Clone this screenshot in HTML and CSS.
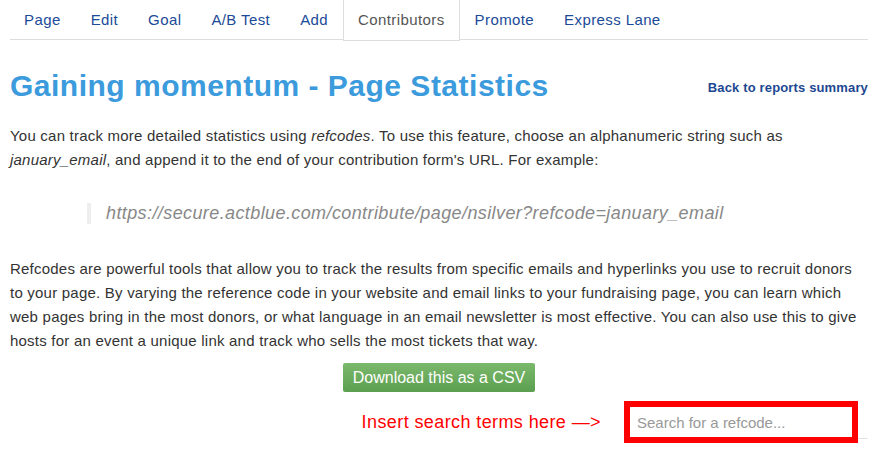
FILE: index.html
```html
<!DOCTYPE html>
<html>
<head>
<meta charset="utf-8">
<link rel="stylesheet" href="styles.css">
</head>
<body>
<div class="page">
  <ul class="tabs">
    <li><a href="#">Page</a></li>
    <li><a href="#">Edit</a></li>
    <li><a href="#">Goal</a></li>
    <li><a href="#">A/B Test</a></li>
    <li><a href="#">Add</a></li>
    <li class="active"><a href="#">Contributors</a></li>
    <li><a href="#">Promote</a></li>
    <li><a href="#">Express Lane</a></li>
  </ul>
  <div class="header">
    <h1 class="title">Gaining momentum - Page Statistics</h1>
    <a class="back" href="#">Back to reports summary</a>
  </div>
  <p class="text">You can track more detailed statistics using <em>refcodes</em>. To use this feature, choose an alphanumeric string such as <em>january_email</em>, and append it to the end of your contribution form's URL. For example:</p>
  <blockquote class="quote">https://secure.actblue.com/contribute/page/nsilver?refcode=january_email</blockquote>
  <p class="text">Refcodes are powerful tools that allow you to track the results from specific emails and hyperlinks you use to recruit donors to your page. By varying the reference code in your website and email links to your fundraising page, you can learn which web pages bring in the most donors, or what language in an email newsletter is most effective. You can also use this to give hosts for an event a unique link and track who sells the most tickets that way.</p>
  <div class="actions">
    <a class="btn" href="#">Download this as a CSV</a>
  </div>
  <div class="search-row">
    <span class="hint">Insert search terms here —&gt;</span>
    <div class="search">
      <input class="search-input" type="text" placeholder="Search for a refcode...">
      <div class="highlight"></div>
    </div>
  </div>
</div>
</body>
</html>
```

FILE: styles.css
```css
html, body {
  margin: 0;
  padding: 0;
  background: #fff;
}
body {
  font-family: "Liberation Sans", Arial, sans-serif;
  color: #333;
  overflow: hidden;
}
.page {
  width: 858px;
  padding-left: 10px;
}
.tabs {
  list-style: none;
  margin: 0;
  padding: 0;
  display: flex;
  border-bottom: 1px solid #ddd;
  height: 39px;
}
.tabs li {
  display: block;
}
.tabs a {
  display: block;
  height: 39px;
  line-height: 39px;
  padding: 0 14px;
  border: 1px solid transparent;
  border-top: 0;
  font-size: 15px;
  letter-spacing: 0.4px;
  color: #1b4a98;
  text-decoration: none;
}
.tabs li:first-child a {
  padding-left: 13px;
}
.tabs .active a {
  color: #555;
  border-color: #ddd;
  background: #fff;
  height: 40px;
  margin-bottom: -1px;
}
.header {
  display: flex;
  justify-content: space-between;
  align-items: baseline;
  margin-top: 28px;
}
.title {
  margin: 0;
  font-size: 30px;
  line-height: 36px;
  font-weight: bold;
  color: #3b9bdc;
  letter-spacing: 0.5px;
}
.back {
  font-size: 13px;
  font-weight: bold;
  letter-spacing: 0.15px;
  color: #1d4891;
  text-decoration: none;
  position: relative;
  top: -4px;
}
.text {
  font-size: 15px;
  line-height: 24px;
  letter-spacing: 0.22px;
  margin: 20px 0 0;
}
.quote {
  margin: 31px 0 0 77px;
  border-left: 4px solid #eee;
  padding: 0 0 0 15px;
  font-size: 18px;
  line-height: 21px;
  letter-spacing: 0.4px;
  font-style: italic;
  color: #888;
}
.quote + .text {
  margin-top: 33px;
}
.actions {
  display: flex;
  justify-content: center;
  margin-top: 10px;
}
.btn {
  display: block;
  width: 192px;
  height: 29px;
  line-height: 29px;
  text-align: center;
  font-size: 16px;
  color: #fff;
  text-decoration: none;
  background: linear-gradient(#7bb96c, #5c9f50);
  border-radius: 2px;
}
.search-row {
  display: flex;
  justify-content: flex-end;
  align-items: center;
  margin-top: 9px;
}
.hint {
  font-size: 18px;
  letter-spacing: 0.4px;
  color: #f00;
  margin-right: 27px;
}
.search {
  position: relative;
  width: 240px;
  height: 42px;
  display: flex;
  align-items: flex-end;
}
.search-input {
  box-sizing: border-box;
  width: 240px;
  height: 34px;
  margin-bottom: 4px;
  border: 1px solid #fff;
  border-bottom-color: #e3e3e3;
  padding: 0 8px;
  font-family: "Liberation Sans", Arial, sans-serif;
  font-size: 15px;
  color: #333;
  outline: none;
}
.search-input::placeholder {
  color: #999;
}
.highlight {
  position: absolute;
  left: -4px;
  top: 0;
  width: 222px;
  height: 30px;
  border: 6px solid #f00;
}
```
